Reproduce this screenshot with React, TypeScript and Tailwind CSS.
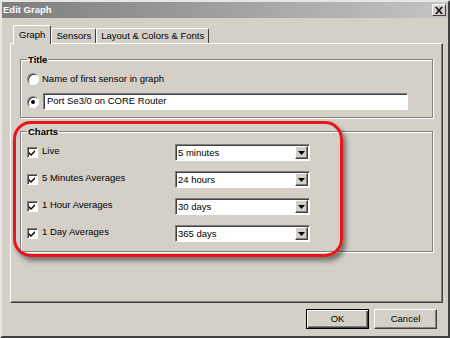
import React from 'react';

// Win2000-style "Edit Graph" dialog with a red annotation ring around the Charts group.

const FONT = "font-['Liberation_Sans',Arial,sans-serif]";

const charts = [
  { label: 'Live', value: '5 minutes' },
  { label: '5 Minutes Averages', value: '24 hours' },
  { label: '1 Hour Averages', value: '30 days' },
  { label: '1 Day Averages', value: '365 days' },
];

function Radio({ checked }: { checked?: boolean }) {
  return (
    <span className="w-[12px] h-[12px] rounded-full bg-white border border-t-[#808080] border-l-[#808080] border-r-[#ffffff] border-b-[#ffffff] shadow-[inset_1px_1px_0_#404040] flex items-center justify-center shrink-0">
      {checked && <span className="w-[4px] h-[4px] rounded-full bg-black" />}
    </span>
  );
}

function Checkbox() {
  return (
    <span className="w-[11px] h-[11px] bg-white border border-t-[#808080] border-l-[#808080] border-r-[#ffffff] border-b-[#ffffff] shadow-[inset_1px_1px_0_#404040] flex items-center justify-center shrink-0">
      <svg width="7" height="7" viewBox="0 0 7 7">
        <path d="M0 3 L2 5 L6 1 L6 3 L2 7 L0 5 Z" fill="#000" />
      </svg>
    </span>
  );
}

function Select({ value }: { value: string }) {
  return (
    <div className="w-[135px] h-[17px] bg-white border border-t-[#808080] border-l-[#808080] border-r-[#ffffff] border-b-[#ffffff] shadow-[inset_1px_1px_0_#404040] flex items-center">
      <span className="flex-1 pl-[2px] text-[9.5px] leading-none">{value}</span>
      <span className="w-[13px] h-[13px] mr-[1px] bg-[#d4d0c8] border border-t-[#ffffff] border-l-[#ffffff] border-r-[#404040] border-b-[#404040] shadow-[inset_-1px_-1px_0_#808080] flex items-center justify-center">
        <svg width="7" height="4" viewBox="0 0 7 4">
          <path d="M0 0 H7 L3.5 4 Z" fill="#000" />
        </svg>
      </span>
    </div>
  );
}

function Button({ label, isDefault }: { label: string; isDefault?: boolean }) {
  return (
    <div
      className={
        'w-[63px] h-[20px] flex items-center justify-center text-[9.5px] bg-[#d4d0c8] ' +
        (isDefault
          ? 'border border-black shadow-[inset_1px_1px_0_#ffffff,inset_-1px_-1px_0_#404040,inset_-2px_-2px_0_#808080]'
          : 'border border-t-[#ffffff] border-l-[#ffffff] border-r-[#404040] border-b-[#404040] shadow-[inset_-1px_-1px_0_#808080]')
      }
    >
      {label}
    </div>
  );
}

export default function App() {
  return (
    <div className={`${FONT} w-[450px] h-[338px] bg-[#d4d0c8] text-black border-2 border-t-[#e8e6e0] border-l-[#e8e6e0] border-r-[#404040] border-b-[#404040] flex flex-col`}>
      {/* Title bar */}
      <div className="h-[16px] flex items-center justify-between pl-[1px] pr-[2px] bg-linear-to-r from-[#7e7e7e] to-[#c4c4c4]">
        <span className="text-[9.5px] font-bold text-white">Edit Graph</span>
        <span className="w-[14px] h-[12px] bg-[#d4d0c8] border border-t-[#ffffff] border-l-[#ffffff] border-r-[#404040] border-b-[#404040] flex items-center justify-center">
          <svg width="8" height="7" viewBox="0 0 8 7">
            <path d="M0 0 H2 L4 2.5 L6 0 H8 L5 3.5 L8 7 H6 L4 4.5 L2 7 H0 L3 3.5 Z" fill="#000" />
          </svg>
        </span>
      </div>

      {/* Tabs */}
      <div className="mt-[7px] ml-[8px] mr-[5px] relative">
        <div className="flex items-end h-[18px] pl-[3px] text-[9.5px]">
          <div className="relative z-10 -mb-px h-[19px] px-[5px] flex items-center bg-[#d4d0c8] border-t border-l border-t-white border-l-white border-r border-r-[#404040] rounded-t-[2px]">
            Graph
          </div>
          <div className="h-[15px] px-[4px] flex items-center border-t border-l border-t-white border-l-white border-r border-r-[#404040] rounded-t-[2px]">
            Sensors
          </div>
          <div className="h-[15px] px-[4px] flex items-center border-t border-l border-t-white border-l-white border-r border-r-[#404040] rounded-t-[2px]">
            Layout &amp; Colors &amp; Fonts
          </div>
        </div>

        {/* Tab panel */}
        <div className="h-[260px] border border-t-white border-l-white border-r-[#404040] border-b-[#404040] shadow-[inset_-1px_-1px_0_#808080] px-[9px] text-[9.5px]">
          <fieldset className="mt-[10px] border border-[#808080] shadow-[inset_1px_1px_0_#ffffff,1px_1px_0_#ffffff] pl-[6px] pb-[7px]">
            <legend className="font-bold px-[1px] leading-[11px]">Title</legend>
            <div className="mt-[6px] h-[16px] flex items-center gap-[3px]">
              <Radio />
              <span>Name of first sensor in graph</span>
            </div>
            <div className="mt-[6px] flex items-center gap-[4px]">
              <Radio checked />
              <div className="w-[365px] h-[17px] bg-white border border-t-[#808080] border-l-[#808080] border-r-[#ffffff] border-b-[#ffffff] shadow-[inset_1px_1px_0_#404040] flex items-center pl-[3px]">
                Port Se3/0 on CORE Router
              </div>
            </div>
          </fieldset>

          <fieldset className="mt-[8px] border border-[#808080] shadow-[inset_1px_1px_0_#ffffff,1px_1px_0_#ffffff] pl-[6px] pb-[9px]">
            <legend className="font-bold px-[1px] leading-[11px]">Charts</legend>
            <div className="mt-[7px] flex flex-col gap-[10px]">
              {charts.map((c) => (
                <div key={c.label} className="h-[17px] flex items-center">
                  <div className="w-[148px] flex items-center gap-[4px] -mt-[1px]">
                    <Checkbox />
                    <span className="-mt-[2px]">{c.label}</span>
                  </div>
                  <Select value={c.value} />
                </div>
              ))}
            </div>
          </fieldset>
        </div>

        {/* Annotation ring */}
        <div className="absolute left-[3px] top-[96px] w-[330px] h-[136px] border-[3px] border-[#e8151b] rounded-[18px] shadow-[3px_4px_5px_rgba(0,0,0,0.45)] pointer-events-none" />
      </div>

      {/* Buttons */}
      <div className="mt-[6px] mr-[11px] flex justify-end gap-[5px]">
        <Button label="OK" isDefault />
        <Button label="Cancel" />
      </div>
    </div>
  );
}
